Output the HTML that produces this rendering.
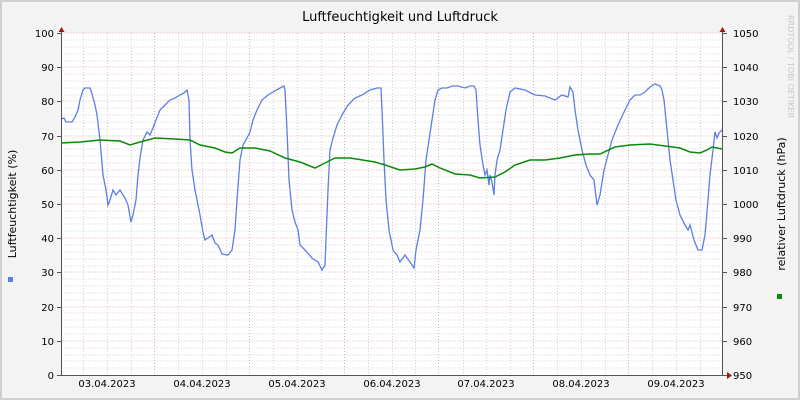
<!DOCTYPE html>
<html><head><meta charset="utf-8"><style>
html,body{margin:0;padding:0;background:#f3f3f3}
svg{display:block}
text{font-family:"DejaVu Sans","Liberation Sans",sans-serif;fill:#000}
</style></head><body>
<svg width="800" height="400" xmlns="http://www.w3.org/2000/svg">
<rect x="0" y="0" width="800" height="400" fill="#f3f3f3"/>
<rect x="1" y="1" width="798" height="398" fill="none" stroke="#cfcfcf" stroke-width="2"/>
<rect x="61" y="33" width="662" height="342" fill="#fff"/>
<g id="grid" stroke-width="1" shape-rendering="crispEdges">
<g stroke="#cfcfcf" stroke-dasharray="1,2">
<path d="M61.5 40h662M61.5 47h662M61.5 54h662M61.5 61h662M61.5 74h662M61.5 81h662M61.5 88h662M61.5 95h662M61.5 108h662M61.5 115h662M61.5 122h662M61.5 129h662M61.5 142h662M61.5 149h662M61.5 156h662M61.5 163h662M61.5 177h662M61.5 184h662M61.5 190h662M61.5 197h662M61.5 211h662M61.5 218h662M61.5 224h662M61.5 231h662M61.5 245h662M61.5 252h662M61.5 259h662M61.5 266h662M61.5 279h662M61.5 286h662M61.5 293h662M61.5 300h662M61.5 313h662M61.5 320h662M61.5 327h662M61.5 334h662M61.5 348h662M61.5 355h662M61.5 361h662M61.5 368h662"/>
<path d="M83.5 33v342M107.5 33v342M131.5 33v342M178.5 33v342M202.5 33v342M226.5 33v342M273.5 33v342M297.5 33v342M321.5 33v342M368.5 33v342M392.5 33v342M415.5 33v342M463.5 33v342M486.5 33v342M510.5 33v342M557.5 33v342M581.5 33v342M605.5 33v342M652.5 33v342M676.5 33v342M700.5 33v342"/>
</g>
<g stroke="#e8a8a8" stroke-dasharray="1,2">
<path d="M61.5 33h662M61.5 67h662M61.5 101h662M61.5 136h662M61.5 170h662M61.5 204h662M61.5 238h662M61.5 272h662M61.5 307h662M61.5 341h662"/>
<path d="M154.5 33v342M249.5 33v342M344.5 33v342M438.5 33v342M533.5 33v342M628.5 33v342"/>
</g>
</g>
<polyline fill="none" stroke="#5b7fe8" stroke-width="1.3" points="61,119 64,118 66,122 72,122 75,117 78,110 80,100 83,90 85,88 90,88 92,94 95,105 97,115 100,140 103,175 106,190 108,205 110,200 113,190 116,195 120,190 125,198 128,205 131,222 133,215 136,200 138,175 140,158 143,140 147,132 150,135 153,128 156,120 160,110 165,105 170,100 175,98 180,95 184,93 187,90 189,100 190,140 192,170 195,190 198,205 200,215 203,232 205,240 208,238 212,235 215,243 218,245 222,254 228,255 232,250 235,230 237,200 240,160 243,145 247,138 250,132 253,120 257,110 262,100 268,95 273,92 280,88 284,86 285,90 287,130 289,180 292,210 295,222 298,230 300,245 305,250 312,258 318,262 322,270 325,265 326,240 328,190 330,150 333,138 337,125 342,115 348,105 355,98 362,95 370,90 377,88 381,88 382,110 384,160 386,200 389,230 393,250 397,255 400,262 405,255 410,262 414,268 416,250 420,230 423,200 426,160 429,140 432,120 435,100 438,90 442,88 447,88 452,86 458,86 465,88 470,86 474,86 476,90 478,120 480,145 483,165 485,175 487,170 489,185 490,175 492,182 494,195 495,175 497,160 500,150 503,130 506,110 510,92 515,88 525,90 535,95 545,96 555,100 562,95 568,97 570,87 573,92 575,110 578,130 582,150 586,165 590,175 594,180 597,205 600,195 604,170 608,155 612,140 618,125 625,110 630,100 635,95 640,95 645,92 650,87 655,84 660,86 662,90 664,100 667,130 670,160 673,180 676,200 680,215 685,225 688,230 690,225 694,240 698,250 702,250 705,235 708,200 710,175 713,150 715,132 717,138 719,133 722,130"/>
<polyline fill="none" stroke="#0a8a0a" stroke-width="1.5" points="61,143 80,142 100,140 120,141 130,145 140,142 155,138 175,139 190,140 200,145 215,148 225,152 232,153 240,148 255,148 270,151 285,158 300,162 315,168 325,163 335,158 350,158 375,162 385,165 400,170 415,169 425,167 432,164 440,168 455,174 470,175 480,178 495,177 505,172 515,165 530,160 545,160 560,158 575,155 590,154 600,154 615,147 630,145 650,144 665,146 680,148 690,152 700,153 707,150 712,147 722,149"/>
<g stroke="#555" shape-rendering="crispEdges">
<path d="M61.5 30v346M722.5 30v346M58 375.5h670"/>
<path d="M57 33.5h4M57 67.5h4M57 101.5h4M57 136.5h4M57 170.5h4M57 204.5h4M57 238.5h4M57 272.5h4M57 307.5h4M57 341.5h4M57 375.5h4M723 33.5h4M723 67.5h4M723 101.5h4M723 136.5h4M723 170.5h4M723 204.5h4M723 238.5h4M723 272.5h4M723 307.5h4M723 341.5h4"/>
</g>
<path d="M58.5 32l3-5 3 5z M719.5 32l3-5 3 5z M727 372l5 3.5-5 3.5z" fill="#a01818"/>
<g font-size="10" text-anchor="end">
<text x="54" y="37">100</text><text x="54" y="71">90</text><text x="54" y="105">80</text><text x="54" y="140">70</text><text x="54" y="174">60</text><text x="54" y="208">50</text><text x="54" y="242">40</text><text x="54" y="276">30</text><text x="54" y="311">20</text><text x="54" y="345">10</text><text x="54" y="379">0</text>
</g>
<g font-size="10">
<text x="733" y="37">1050</text><text x="733" y="71">1040</text><text x="733" y="105">1030</text><text x="733" y="140">1020</text><text x="733" y="174">1010</text><text x="733" y="208">1000</text><text x="733" y="242">990</text><text x="733" y="276">980</text><text x="733" y="311">970</text><text x="733" y="345">960</text><text x="733" y="379">950</text>
</g>
<g font-size="10" text-anchor="middle">
<text x="107" y="387">03.04.2023</text><text x="202" y="387">04.04.2023</text><text x="297" y="387">05.04.2023</text><text x="392" y="387">06.04.2023</text><text x="486" y="387">07.04.2023</text><text x="581" y="387">08.04.2023</text><text x="676" y="387">09.04.2023</text>
</g>
<text x="400" y="21" font-size="13" text-anchor="middle">Luftfeuchtigkeit und Luftdruck</text>
<text transform="translate(16,204) rotate(-90)" font-size="11" text-anchor="middle">Luftfeuchtigkeit (%)</text>
<text transform="translate(785,204) rotate(-90)" font-size="11" text-anchor="middle">relativer Luftdruck (hPa)</text>
<text transform="translate(788,15) rotate(90)" font-size="8" style="fill:#c8c8c8">RRDTOOL / TOBI OETIKER</text>
<rect x="8" y="277" width="5" height="5" fill="#5b7fe8"/>
<rect x="777" y="294" width="5" height="5" fill="#0a8a0a"/>
</svg>
</body></html>
